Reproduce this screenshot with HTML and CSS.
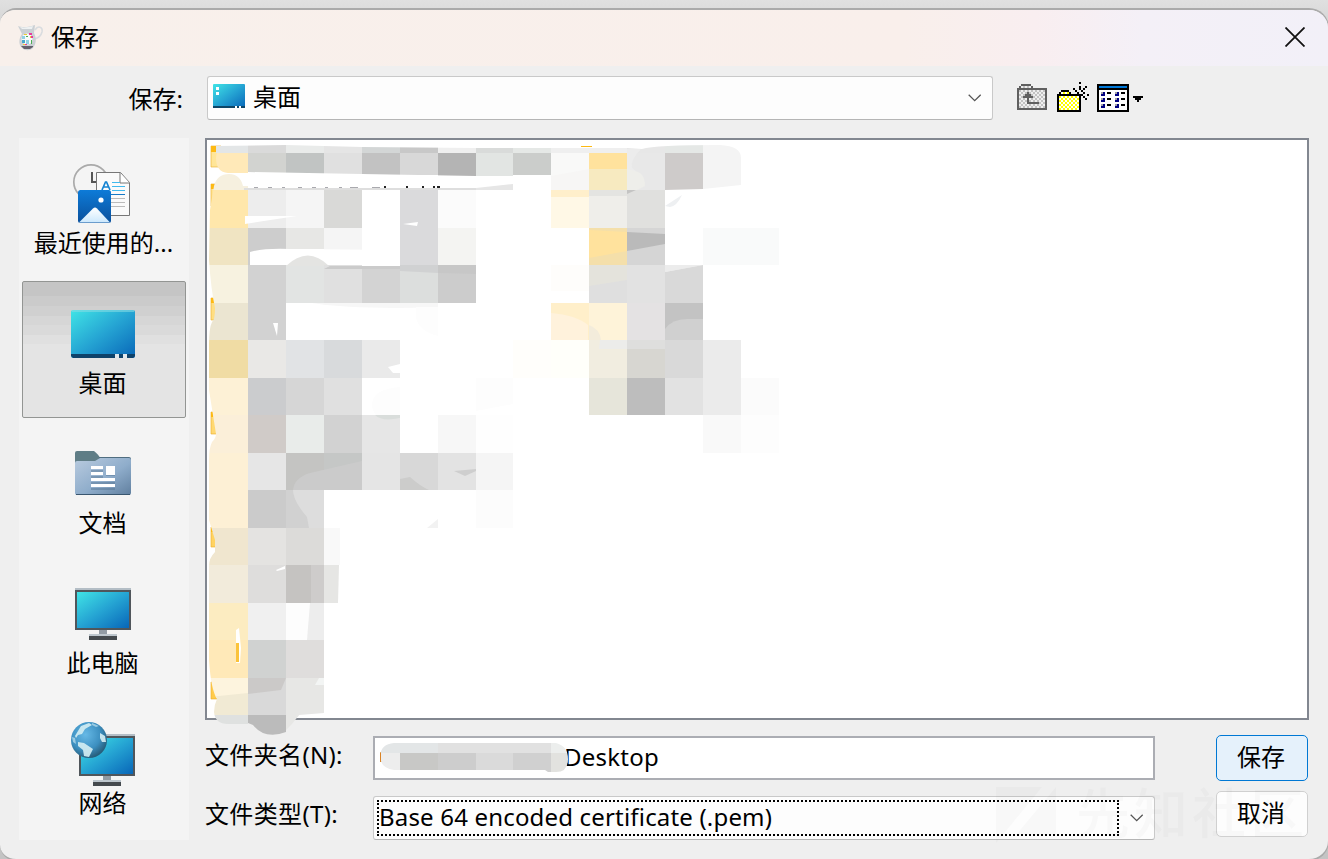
FILE: index.html
```html
<!DOCTYPE html>
<html lang="zh-CN">
<head>
<meta charset="utf-8">
<title>保存</title>
<link rel="stylesheet" href="styles.css">
</head>
<body>
<svg class="defs" width="0" height="0" aria-hidden="true">
  <defs>
    <linearGradient id="screen" x1="0" y1="0" x2="1" y2="1"><stop offset="0" stop-color="#40e4e6"/><stop offset=".5" stop-color="#25a4d3"/><stop offset="1" stop-color="#0866b8"/></linearGradient>
    <linearGradient id="photo" x1="0" y1="0" x2="0" y2="1"><stop offset="0" stop-color="#0d7bd8"/><stop offset="1" stop-color="#0a509c"/></linearGradient>
    <linearGradient id="peak" x1="0" y1="0" x2="0" y2="1"><stop offset="0" stop-color="#fff"/><stop offset="1" stop-color="#cce8fd"/></linearGradient>
    <linearGradient id="docs" x1="0" y1="0" x2="1" y2="1"><stop offset="0" stop-color="#b9cbdf"/><stop offset=".55" stop-color="#8fadcb"/><stop offset="1" stop-color="#607f9f"/></linearGradient>
    <linearGradient id="fold" x1="0" y1="0" x2="0" y2="1"><stop offset="0" stop-color="#ffe69a"/><stop offset="1" stop-color="#ffcb4b"/></linearGradient>
    <radialGradient id="globe" cx=".4" cy=".35" r=".7"><stop offset="0" stop-color="#66b9e6"/><stop offset=".6" stop-color="#3c8fc0"/><stop offset="1" stop-color="#24556f"/></radialGradient>
    <pattern id="grayDots" width="4" height="4" patternUnits="userSpaceOnUse"><rect width="4" height="4" fill="#efefef"/><path fill="#c2c2c2" d="M0 0h2v2H0zM2 2h2v2H2z"/></pattern>
    <pattern id="yellowDots" width="4" height="4" patternUnits="userSpaceOnUse"><rect width="4" height="4" fill="#fff"/><path fill="#ff0" d="M0 0h2v2H0zM2 2h2v2H2z"/></pattern>
    <symbol id="monitor" viewBox="0 0 56 52"><path fill="#b4bec6" d="M0 0h56v2H0z"/><path fill="#50565b" d="M0 2h56v40H0z"/><path fill="url(#screen)" d="M2 4h52v36H2z"/><path fill="#929ba4" d="M24 42h8v5h-8z"/><path fill="#bdc6cd" d="M14 46h28v2H14z"/><path fill="#454a4e" d="M14 48h28v4H14z"/></symbol>
  </defs>
</svg>

<main class="window">
  <header class="titlebar">
    <svg class="app-icon" viewBox="0 0 28 28" width="28" height="28">
      <path fill="none" stroke="#d9dcdf" stroke-width="1.6" d="M18 6c3-5 8-3 7 2-1 4-4 6-7 7"/>
      <path fill="#cbd0d4" d="M1 2c4 2 12 1 17-1l-1 8c3 6 2 11-1 15-3 3-8 3-11 0-4-4-3-10 0-14z"/>
      <path fill="#eef1f2" d="M3 3c4 1 9 0 13-1l-1 3H5z"/>
      <circle cx="10" cy="15" r="5.5" fill="#f7fafa"/>
      <path fill="#8ed0e4" d="M5 12h3v3H5zM9 16h3v4H9z"/><path fill="#49a8cc" d="M5 16h3v3H5z"/><path fill="#e53b9b" d="M12 9h3v2h-3zM14 12h2v2h-2zM8 20h2v1H8z"/><path fill="#eccb30" d="M7 10h3v1H7zM6 20h2v1H6zM13 12h1v2h-1z"/><path fill="#4eae55" d="M14 16h1v4h-1zM9 12h2v1H9z"/><path fill="#65606c" d="M4 22h12v1l-3 2H7z"/>
    </svg>
    <h1 class="title">保存</h1>
    <svg class="close" viewBox="0 0 20 20" width="20" height="20"><path d="M.5.5l19 19M19.5.5l-19 19" fill="none" stroke="#111" stroke-width="1.8"/></svg>
  </header>

  <div class="toolbar">
    <span class="look-label">保存:</span>
    <div class="combo look-in">
      <svg class="look-icon" viewBox="0 0 32 24" width="32" height="24"><rect width="32" height="24" rx="1" fill="url(#screen)"/><path fill="#0d4668" d="M0 22h32v2H0z"/><path fill="#fff" d="M3 3h3v3H3zM3 8h3v3H3zM22 22h2v2h-2zM26 22h2v2h-2z"/></svg>
      <span class="combo-text">桌面</span>
      <svg class="chevron" viewBox="0 0 14 8" width="14" height="8"><path d="M.7.7l6 6 6-6" fill="none" stroke="#555" stroke-width="1.3"/></svg>
    </div>
    <div class="tools">
      <svg viewBox="0 0 30 26" width="30" height="26" shape-rendering="crispEdges">
        <path fill="url(#grayDots)" d="M4 2h10v2h14v20H2V4h2z"/>
        <path fill="#606060" d="M4 0h10v2H4zM2 2h2v2H2zM14 2h2v2h-2zM0 4h30v22H0zM2 6v18h26V6z" fill-rule="evenodd"/>
        <path fill="#606060" d="M10 8h2v2h2v2h2v2h-4v4h10v2H10v-6H6v-2h2v-2h2z"/>
      </svg>
      <svg viewBox="0 0 32 30" width="32" height="30" shape-rendering="crispEdges">
        <path fill="url(#yellowDots)" d="M4 10h8v2h10v16H2V12h2z"/>
        <path fill="#000" fill-rule="evenodd" d="M4 8h8v2H4zM2 10h2v2H2zM12 10h2v2h-2zM0 12h24v18H0zM2 14v14h20V14z"/>
        <path fill="#efefef" d="M20 10h6v4h-2v-2h-4z"/>
        <path fill="#000" d="M22 0h2v2h-2zM22 4h2v4h-2zM16 6h2v2h-2zM18 8h2v2h-2zM20 10h2v2h-2zM28 4h2v2h-2zM26 6h2v2h-2zM24 8h2v2h-2zM16 12h4v2h-4zM26 10h2v2h-2zM30 12h2v2h-2zM24 12h2v2h-2zM26 14h2v2h-2zM28 16h2v2h-2zM22 14h2v4h-2z"/>
      </svg>
      <svg viewBox="0 0 46 28" width="46" height="28" shape-rendering="crispEdges">
        <path d="M0 0h32v28H0z"/><path fill="#0078d7" d="M2 2h28v2H2z"/><path fill="#fff" d="M2 6h28v20H2z"/>
        <path fill="#a0a0a4" d="M4 8h4v4H4zM4 14h4v4H4zM4 20h4v4H4zM18 8h4v4h-4zM18 14h4v4h-4zM18 20h4v4h-4z"/>
        <path fill="#000080" d="M6 8h2v4H4v-2h2zM6 14h2v4H4v-2h2zM6 20h2v4H4v-2h2zM20 8h2v4h-4v-2h2zM20 14h2v4h-4v-2h2zM20 20h2v4h-4v-2h2z"/>
        <path d="M10 8h4v2h-4zM10 14h4v2h-4zM10 20h4v2h-4zM24 8h4v2h-4zM24 14h4v2h-4zM24 20h4v2h-4zM36 12h10v2h-2v2h-2v2h-2v-2h-2v-2h-2z"/>
      </svg>
    </div>
  </div>

  <div class="content">
    <nav class="places">
      <div class="place">
        <svg viewBox="0 0 64 64" width="64" height="64">
          <circle cx="20" cy="20" r="17.2" fill="#f4f4f4" stroke="#aaa" stroke-width="1.7"/><path d="M21 10v10h5" fill="none" stroke="#555" stroke-width="2"/>
          <path d="M25.5 10.500h24l9 10v33h-33z" fill="#fafafa" stroke="#777"/><path d="M49 11v10h9.500" fill="#fff" stroke="#777"/>
          <path d="M31 28l3.500-8h1L39 28M32 25h5" fill="none" stroke="#1684d2" stroke-width="1.700"/>
          <path d="M41 20.500h8M41 24.500h13M41 28.500h13" stroke="#40b9ee"/><path d="M40 32.500h14" stroke="#1778c5"/><path d="M40 36.500h14M40 40.500h14M40 44.500h14" stroke="#bbb"/>
          <rect x="7" y="28" width="33" height="33" rx="2.500" fill="url(#photo)"/><path fill="url(#peak)" d="M8 60.500l14-14q2-2 4 0l13 14z"/><circle cx="30" cy="38" r="2.600" fill="#fff"/>
        </svg>
        <span class="recent">最近使用的...</span>
      </div>
      <div class="place selected">
        <svg viewBox="0 0 64 64" width="64" height="64"><rect y="8" width="64" height="48" rx="2" fill="url(#screen)"/><path fill="#86dbe3" opacity=".6" d="M1 8h62v2H1z"/><path fill="#0e426a" d="M0 52h64v2l-2 2H2l-2-2z"/><path fill="#e0e8ed" d="M44 52h4v4h-4zM52 52h4v4h-4z"/></svg>
        <span>桌面</span>
      </div>
      <div class="place">
        <svg viewBox="0 0 64 64" width="64" height="64"><path fill="#5f7d86" d="M6 9h17q5 4 6 7v10H4V11q0-2 2-2z"/><path fill="#4f6d80" d="M28 15h30q2 0 2 2v6H28z"/><path fill="url(#docs)" d="M4 21q0-2 2-2h18l5-3h29q2 0 2 2v33q0 2-2 2H6q-2 0-2-2z"/><path d="M5 52.500h54" stroke="#39566f"/><path fill="#4c6b89" opacity=".4" d="M20 28h12v2H20zM20 34h12v2H20zM20 40h24v2H20zM20 46h24v2H20zM35 32h9v2h-9z"/><path fill="#fff" d="M20 24h12v3H20zM20 30h12v3H20zM20 36h24v3H20zM20 42h24v3H20zM35 24h9v9h-9z"/></svg>
        <span>文档</span>
      </div>
      <div class="place">
        <svg viewBox="0 0 64 64" width="64" height="64"><use href="#monitor" x="4" y="6" width="56" height="52"/></svg>
        <span>此电脑</span>
      </div>
      <div class="place">
        <svg viewBox="0 0 64 64" width="64" height="64"><use href="#monitor" x="8" y="12" width="56" height="52"/><circle cx="18" cy="18" r="18" fill="url(#globe)"/><path fill="#d5eef3" opacity=".9" d="M7 20l6 1 9 6-4 8-5-1-1-6-5-4zM29 11l5 3 1 6-4 0-2-4zM10 4l8-3 3 2-7 4-3 5-4 1-2 3-1-2z"/><path fill="#bde1ef" opacity=".7" d="M1 15l3 1 1 6-3-2zM21 1l7 3-3 1-4-2z"/></svg>
        <span>网络</span>
      </div>
    </nav>

    <section class="main">
      <div class="list">
        <svg class="mosaic" viewBox="205 138 600 600" width="600" height="600">
          <defs>
            <clipPath id="edge"><path d="M248 146H222Q216 150 216 158Q216 172 228 173H248V186H243Q240 174 229 174Q217 174 214 186L210 210L209 260Q211 290 215 308Q215 320 212 322Q209 328 209 345V390L216 434Q216 438 212 442Q209 448 209 460V520L215 540V552Q209 558 209 566V660Q211 690 217 699Q214 705 214 712Q215 724 228 724H248z"/></clipPath>
            <clipPath id="topband"><path d="M216 146L286 145 362 147 476 148 627 148 642 149Q655 145 720 145Q741 146 741 158V185L703 189 665 190H551V183L513 176H476L362 174 248 172H216z"/></clipPath>
          </defs>
          <g fill="url(#fold)" stroke="#e9ad28" stroke-width=".6"><path d="M211 146h10v21h-10zM211 184h8v22h-8zM211 298h8v22h-8zM211 412h8v22h-8zM211 527h8v20h-8zM211 682h10v17h-10z"/></g>
          <path fill="#fdb913" d="M211 146h10v6h-10zM211 184h5v5h-5zM211 298h3v5h-3zM211 412h2v5h-2zM211 527h2v5h-2zM581 146h11v1h-11z"/>
          <g clip-path="url(#topband)">
            <rect x="210" y="145" width="38" height="8" fill="#e3e6e7"/><rect x="248" y="145" width="38" height="8" fill="#dadada"/><rect x="286" y="145" width="38" height="8" fill="#e9ebea"/><rect x="324" y="145" width="38" height="8" fill="#e5e5e5"/><rect x="362" y="145" width="38" height="8" fill="#d3d6d6"/><rect x="400" y="145" width="38" height="8" fill="#c8c8c8"/><rect x="438" y="145" width="38" height="8" fill="#efefef"/><rect x="476" y="145" width="37" height="8" fill="#d9dbda"/><rect x="513" y="145" width="38" height="8" fill="#e5e8e6"/><rect x="551" y="145" width="76" height="8" fill="#efefef"/><rect x="627" y="145" width="38" height="8" fill="#e7e7e7"/><rect x="665" y="145" width="38" height="8" fill="#e5e8e6"/>
            <rect x="248" y="153" width="38" height="20" fill="#d2d3d0"/><rect x="286" y="153" width="38" height="21" fill="#c1c4c3"/><rect x="324" y="153" width="38" height="21" fill="#e0e0e0"/><rect x="362" y="153" width="38" height="22" fill="#c2c2c2"/><rect x="400" y="153" width="38" height="22" fill="#d8d8d8"/><rect x="438" y="153" width="38" height="23" fill="#b4b4b4"/><rect x="476" y="153" width="37" height="23" fill="#e2e5e3"/><rect x="513" y="153" width="38" height="22" fill="#cbcdcb"/><rect x="551" y="153" width="38" height="37" fill="#f9f9f8"/><rect x="589" y="153" width="38" height="37" fill="#ffe29d"/><rect x="627" y="153" width="38" height="37" fill="#e8e8e8"/><rect x="665" y="153" width="38" height="37" fill="#cecbca"/><rect x="703" y="145" width="38" height="45" fill="#f4f4f4"/>
          </g>
          <path fill="#ececec" d="M627 149h14Q630 160 632 168L643 177 627 178z"/><path fill="#eeeeea" d="M627 169l8 2q10 2 10 15l-8 4h-10z"/><path fill="#f7eac0" d="M589 169h38v21h-38z"/><path fill="#f7f6f5" d="M551 176l38-7v21h-38z"/>
          <g clip-path="url(#edge)">
            <rect x="208" y="145" width="40" height="8" fill="#e3e6e7"/><rect x="208" y="153" width="40" height="20" fill="#ffe9b8"/><rect x="208" y="173" width="40" height="17" fill="#f6f0df"/><rect x="208" y="190" width="40" height="38" fill="#ffe7ab"/><rect x="208" y="228" width="40" height="37" fill="#f0e4c2"/><rect x="208" y="265" width="40" height="38" fill="#f7f2e0"/><rect x="208" y="303" width="40" height="37" fill="#ebe5d1"/><rect x="208" y="340" width="40" height="38" fill="#f0dca4"/><rect x="208" y="378" width="40" height="37" fill="#fdf1d6"/><rect x="208" y="415" width="40" height="38" fill="#fbefd9"/><rect x="208" y="453" width="40" height="75" fill="#fdf0d5"/><rect x="208" y="528" width="40" height="37" fill="#f0e6cf"/><rect x="208" y="565" width="40" height="38" fill="#f2ebdb"/><rect x="208" y="603" width="40" height="37" fill="#fcecc1"/><rect x="208" y="640" width="40" height="38" fill="#ffe9b8"/><rect x="208" y="678" width="40" height="20" fill="#fdf4de"/><path fill="#f1ead4" d="M208 697l40-4v22h-40z"/><rect x="208" y="715" width="40" height="10" fill="#dfe1e0"/>
          </g>
          <path fill="#dedede" d="M244 188h269v2H244z"/><path fill="#e6e6e6" d="M476 188l37-4v6h-37z"/>
          <path fill="#a9a9ae" d="M254 187h4v1h-4zM268 187h4v1h-4zM282 187h3v1h-3zM298 187h4v1h-4zM312 187h4v1h-4zM325 187h3v1h-3zM339 187h3v1h-3zM350 187h8v1h-8zM372 187h8v1h-8z"/><path fill="#222" d="M384 186h2v2h-2zM406 186h2v2h-2zM422 186h2v2h-2zM433 186h2v2h-2zM437 186h3v2h-3z"/>

          <rect x="248" y="190" width="38" height="38" fill="#ededed"/><rect x="286" y="190" width="38" height="38" fill="#f5f5f5"/><rect x="324" y="190" width="38" height="38" fill="#d9d9d7"/><rect x="400" y="190" width="38" height="75" fill="#dadadc"/><rect x="438" y="190" width="38" height="38" fill="#fbfbfb"/>
          <rect x="551" y="190" width="38" height="38" fill="#fff8e6"/><path fill="#ffefcb" d="M551 190h38v7h-38z"/><rect x="589" y="190" width="38" height="38" fill="#efeeea"/><path fill="#e4e4e1" d="M589 190h38v6h-38z"/><rect x="627" y="190" width="38" height="38" fill="#e0e0de"/><path fill="#c4c4c3" d="M627 190h9l-9 4z"/>
          <path fill="#eef0f2" d="M665 206l17-11q-5 11-12 12z"/>

          <rect x="248" y="228" width="38" height="37" fill="#cdcdcd"/><rect x="286" y="228" width="38" height="21" fill="#e7e7e5"/><rect x="324" y="228" width="38" height="22" fill="#f5f5f5"/><rect x="438" y="228" width="38" height="37" fill="#f4f4f2"/>
          <rect x="589" y="228" width="38" height="37" fill="#ffe29d"/><path fill="#f4dfaa" d="M589 228h38v4l-38-2zM589 258l38-7v14h-38z"/><rect x="627" y="228" width="38" height="37" fill="#d5d5d5"/><path fill="#bababa" d="M627 232l38 2v10l-38 7z"/><rect x="703" y="228" width="76" height="37" fill="#f9fafa"/>
          <path fill="#fff" d="M245 216h52l-20 3-32 5zM250 252q14-4 40-3l110 1v15l-150 1zM403 224l15-2-1 4z"/>

          <rect x="248" y="265" width="38" height="75" fill="#d2d2d2"/><rect x="286" y="265" width="38" height="38" fill="#e2e4e3"/><path fill="#e4e4e2" d="M286 266q22-21 43 0z"/><rect x="324" y="265" width="38" height="38" fill="#e0e0e0"/><path fill="#cbcbcb" d="M330 266h70v3h-76z"/><rect x="362" y="269" width="38" height="34" fill="#d3d3d3"/><rect x="400" y="265" width="38" height="38" fill="#dcdedd"/><rect x="438" y="265" width="38" height="38" fill="#cccccc"/><path fill="#d0d1d2" d="M400 265h38v8l-38-2z"/><path fill="#c7c7c7" d="M438 265h38v9l-38-1z"/>
          <rect x="551" y="265" width="38" height="26" fill="#fefdfb"/><rect x="589" y="265" width="38" height="38" fill="#dfdfdf"/><path fill="#e4e3dc" d="M589 265h38v15l-38 6z"/><rect x="627" y="265" width="38" height="38" fill="#e2e2e2"/><path fill="#ececec" d="M665 265h38L665 272z"/><path fill="#d9d9d9" d="M665 272l38-7v38h-38z"/>

          <path fill="#f7f7f7" d="M312 303h126v4q-78 3-126-4z"/><path fill="#fdfdfd" d="M416 307h22v29q-19-5-22-18z"/>
          <path fill="#fff" d="M273 323h5l-1 13z"/>
          <rect x="551" y="303" width="38" height="37" fill="#ffefca"/><path fill="#fff2dc" d="M551 313q25 2 37 12v15h-37z"/><rect x="589" y="303" width="38" height="37" fill="#fef3d9"/><path fill="#f3ecdb" d="M589 325q11 4 12 15h-12z"/><rect x="627" y="303" width="38" height="37" fill="#e4e2e3"/><rect x="665" y="303" width="38" height="37" fill="#c3c3c3"/><path fill="#d0d0d0" d="M665 329q7-10 22-10h16v21h-38z"/>

          <rect x="248" y="340" width="38" height="38" fill="#e9e8e6"/><rect x="286" y="340" width="38" height="38" fill="#e1e3e5"/><rect x="324" y="340" width="38" height="38" fill="#d8dadc"/><rect x="362" y="340" width="38" height="38" fill="#eaeaea"/><path fill="#fff" d="M388 367l12-3v9h-7z"/>
          <rect x="513" y="340" width="38" height="38" fill="#fffefb"/><rect x="551" y="340" width="38" height="38" fill="#fffffa"/><rect x="589" y="340" width="38" height="38" fill="#f1ede0"/><path fill="#ececea" d="M600 340h27v9h-28z"/><rect x="627" y="340" width="38" height="38" fill="#d7d6d1"/><path fill="#dededd" d="M627 340h38v9h-38z"/><rect x="665" y="340" width="38" height="38" fill="#d9d9d9"/><rect x="703" y="340" width="38" height="75" fill="#ebebeb"/>

          <rect x="248" y="378" width="38" height="37" fill="#cbccce"/><rect x="286" y="378" width="38" height="37" fill="#d6d6d6"/><rect x="324" y="378" width="38" height="37" fill="#e0e0e0"/><path fill="#fdfdfd" d="M400 387q-28 2-28 18 0 5 4 10h24zM476 378h37v26l-37 7z"/><rect x="589" y="378" width="38" height="37" fill="#e6e5da"/><rect x="627" y="378" width="38" height="37" fill="#bdbdbd"/><rect x="665" y="378" width="38" height="37" fill="#e2e2e2"/><rect x="741" y="378" width="38" height="37" fill="#fbfbfb"/>

          <rect x="248" y="415" width="38" height="38" fill="#d0cbc8"/><rect x="286" y="415" width="38" height="38" fill="#e9ecea"/><rect x="324" y="415" width="38" height="38" fill="#d2d2d2"/><rect x="362" y="415" width="38" height="38" fill="#e6e6e6"/><path fill="#d9dddb" d="M375 415h25v3q-18 4-25-3z"/><rect x="438" y="415" width="38" height="38" fill="#f7f7f7"/><rect x="476" y="415" width="37" height="38" fill="#fefefe"/><rect x="703" y="415" width="38" height="38" fill="#f9f9f9"/><rect x="741" y="415" width="38" height="38" fill="#fdfdfd"/>

          <rect x="248" y="453" width="38" height="37" fill="#e6e6e6"/><rect x="286" y="453" width="38" height="37" fill="#c4c4c2"/><rect x="324" y="453" width="38" height="37" fill="#c5c7c6"/><path fill="#cbcbcb" d="M293 490q1-12 17-17l52-12v29z"/><rect x="362" y="453" width="38" height="37" fill="#e5e5e5"/><rect x="400" y="453" width="38" height="37" fill="#d8d8d8"/><path fill="#cccccb" d="M400 479l10-2q10 9 19 13h-29z"/><rect x="438" y="453" width="38" height="37" fill="#e3e3e3"/><path fill="#cecece" d="M454 471l22-2v2l-11 5z"/><rect x="476" y="453" width="37" height="37" fill="#f5f5f5"/>

          <rect x="248" y="490" width="38" height="38" fill="#cbcbcb"/><path fill="#d1d1d1" d="M286 490h38v38h-38z"/><path fill="#dddddd" d="M293 490h31v38h-15l-2-11q-14-16-14-27z"/><path fill="#f2f2f2" d="M427 528l11-9v9z"/><rect x="476" y="490" width="37" height="38" fill="#fcfcfc"/>
          <rect x="248" y="528" width="38" height="37" fill="#e4e3e1"/><rect x="286" y="528" width="38" height="37" fill="#dcdbd9"/><rect x="324" y="528" width="16" height="37" fill="#f9f9f9"/>
          <rect x="248" y="565" width="38" height="38" fill="#dedddc"/><rect x="286" y="565" width="25" height="38" fill="#c5c3c1"/><rect x="311" y="565" width="13" height="38" fill="#cecccb"/><path fill="#e6e6e4" d="M324 565h15l-1 38h-14z"/><path fill="#fff" d="M276 570l9-4v3l-8 2z"/>
          <rect x="248" y="603" width="38" height="37" fill="#f0f0f0"/><rect x="286" y="603" width="38" height="37" fill="#fdfdfd"/><path fill="#ededed" d="M310 603h14v37h-17z"/>
          <rect x="248" y="640" width="38" height="38" fill="#d0d2d1"/><rect x="286" y="640" width="38" height="38" fill="#dfdddc"/><path fill="#fff" d="M236 630l3-2 2 20-1 15h-4z"/><path fill="#fbc33b" d="M236 643h3v19h-3z"/>
          <rect x="248" y="678" width="38" height="37" fill="#d9d9d9"/><path fill="#cbc9c8" d="M248 678h38l-5 12-33 4z"/><path fill="#e7e7e5" d="M286 678h38v35l-25 2-13 15z"/><path fill="#f3f5f4" d="M319 678h5v7h-9z"/>
          <path fill="#bbb" d="M248 715h38v17q-21 8-33-7l-5-2z"/><path fill="#e7e7e5" d="M286 715h13l-7 9-6 6z"/>
        </svg>
      </div>
      <div class="form">
        <div class="fields">
          <label class="field-label">文件夹名(N):</label>
          <div class="input">
            <svg class="redaction" viewBox="0 0 190 32" width="190" height="32"><defs><clipPath id="pill"><path d="M14 1h162q12 3 12 16 0 13-12 13h-8l-3-2H14Q0 26 0 14 1 2 14 1z"/></clipPath></defs><path fill="#d98224" d="M0 10h3v10H0z"/><g clip-path="url(#pill)"><path fill="#e3e6e7" d="M0 0h58v11H0z"/><path fill="#e1e1e1" d="M58 0h113v11H58z"/><path fill="#eceeed" d="M171 0h19v11h-19z"/><path fill="#ededed" d="M1 11h19v20H1z"/><path fill="#c8c8c6" d="M20 11h38v20H20z"/><path fill="#cdcdcd" d="M58 11h38v20H58z"/><path fill="#dadada" d="M96 11h37v20H96z"/><path fill="#d0d0d0" d="M133 11h38v20h-38z"/><path fill="#e2e2df" d="M171 11h19v20h-19z"/></g></svg>
            <span class="folder-name">Desktop</span>
          </div>
          <label class="field-label type-label">文件类型(T):</label>
          <div class="combo type">
            <span class="focus"><span class="type-text">Base 64 encoded certificate (.pem)</span></span>
            <svg class="chevron" viewBox="0 0 14 8" width="14" height="8"><path d="M.7.7l6 6 6-6" fill="none" stroke="#555" stroke-width="1.3"/></svg>
          </div>
        </div>
        <div class="buttons">
          <button class="btn primary">保存</button>
          <button class="btn">取消</button>
        </div>
      </div>
    </section>
  </div>
  <div class="watermark"><svg viewBox="0 0 60 56" width="60" height="56"><path fill="currentColor" d="M0 0h46L0 56zM60 0v48H20z"/></svg><span>先知社区</span></div>
</main>
</body>
</html>
```

FILE: styles.css
```css
* { box-sizing: border-box; }

body {
  margin: 0;
  height: 859px;
  overflow: hidden;
  padding-top: 8px;
  background: linear-gradient(#e0e0e0, #d3d3d3 30px, #c4c4c4);
  font: 24px/36px "Noto Sans", "Noto Sans CJK SC", sans-serif;
  color: #000;
}

.defs { display: block; height: 0; }

.window {
  position: relative;
  width: 1329px;
  height: 853px;
  border: 2px solid #aaa;
  border-left-width: 0;
  border-right-width: 1px;
  border-radius: 16px 20px 20px 16px;
  background: #efefef;
  overflow: hidden;
}

.titlebar {
  display: flex;
  align-items: center;
  height: 56px;
  padding: 0 23px 2px 17px;
  background: linear-gradient(90deg, #f8f0eb 0, #f9efeb 68%, #f9eef0 78%, #f4f0f7 86%, #f2f0f8);
}
.app-icon { flex: none; margin-top: 2px; }
.title { margin: 0 auto 0 6px; font: inherit; }
.close { flex: none; }

.toolbar {
  display: flex;
  align-items: flex-start;
  height: 72px;
  padding-top: 10px;
}
.look-label { width: 183px; padding-top: 5px; text-align: right; }

.combo {
  display: flex;
  align-items: center;
  height: 44px;
  border: 1px solid #c9c9c9;
  border-bottom-color: #b5b5b5;
  border-radius: 3px;
  background: #fdfdfd;
}
.look-in { width: 786px; margin-left: 24px; padding: 0 10px 0 5px; }
.look-icon { margin-top: -4px; }
.combo-text { flex: 1; padding: 0 0 2px 8px; }
.tools { display: flex; align-items: flex-start; gap: 10px; padding: 8px 0 0 24px; }
.tools svg:nth-child(2) { margin-top: -2px; }
.tools svg:nth-child(3) { margin-left: -2px; }

.content { display: flex; gap: 16px; padding-left: 19px; }

.places {
  display: flex;
  flex-direction: column;
  gap: 3px;
  width: 170px;
  height: 702px;
  padding: 3px;
  background: #f4f4f4;
}
.place {
  display: flex;
  flex-direction: column;
  align-items: center;
  height: 137px;
  padding: 20px 3px 0 0;
  border: 1px solid transparent;
  white-space: nowrap;
}
.place svg { flex: none; }
.place span { margin-top: -1px; }
.place .recent { padding-left: 2px; }
.place:nth-child(n+4) { padding-top: 21px; }
.selected {
  border-color: #939593;
  border-radius: 2px;
  background: linear-gradient(#c5c5c5 0 14px, #cbcbcb 14px 24px, #d0d0d0 24px 34px, #d6d6d6 34px 43px, #dadada 43px 53px, #e0e0e0 53px 62px, #e4e4e4 62px);
}

.main { width: 1104px; }
.list {
  position: relative;
  height: 582px;
  border: 2px solid #828790;
  background: #fff;
}
.mosaic { position: absolute; left: -2px; top: -2px; overflow: visible; }

.form { display: flex; justify-content: space-between; padding-top: 15px; }
.fields {
  display: grid;
  grid-template-columns: 168px 782px;
  row-gap: 16px;
  padding-top: 1px;
}
.field-label { padding-top: 1px; letter-spacing: .35px; white-space: nowrap; }
.type-label { padding-top: 0; }
.input {
  display: flex;
  align-items: center;
  height: 44px;
  padding-left: 5px;
  border: 2px solid #abadb3;
  background: #fff;
}
.redaction { position: relative; z-index: 1; flex: none; }
.folder-name { margin-left: -6px; padding-bottom: 2px; letter-spacing: .25px; }
.type { justify-content: space-between; padding: 0 10px 0 3px; }
.focus {
  display: flex;
  align-items: center;
  width: 742px;
  height: 36px;
  border: 2px dotted #000;
  white-space: nowrap;
}
.type-text { padding-bottom: 2px; letter-spacing: .18px; }

.buttons { display: flex; flex-direction: column; gap: 10px; width: 93px; padding-right: 1px; }
.btn {
  height: 46px;
  padding: 0 2px 2px 0;
  border: 1px solid #d0d0d0;
  border-radius: 5px;
  background: #fdfdfd;
  font: inherit;
  color: #000;
}
.primary { border-color: #0078d4; background: #e5f1fb; }

.watermark {
  position: absolute;
  right: 20px;
  bottom: 6px;
  display: flex;
  align-items: center;
  gap: 20px;
  font-size: 54px;
  font-weight: 500;
  line-height: 80px;
  letter-spacing: 4px;
  color: rgba(120, 120, 120, .035);
  pointer-events: none;
}
.watermark span { margin-top: -6px; }
.watermark svg { margin-top: -2px; }
```
